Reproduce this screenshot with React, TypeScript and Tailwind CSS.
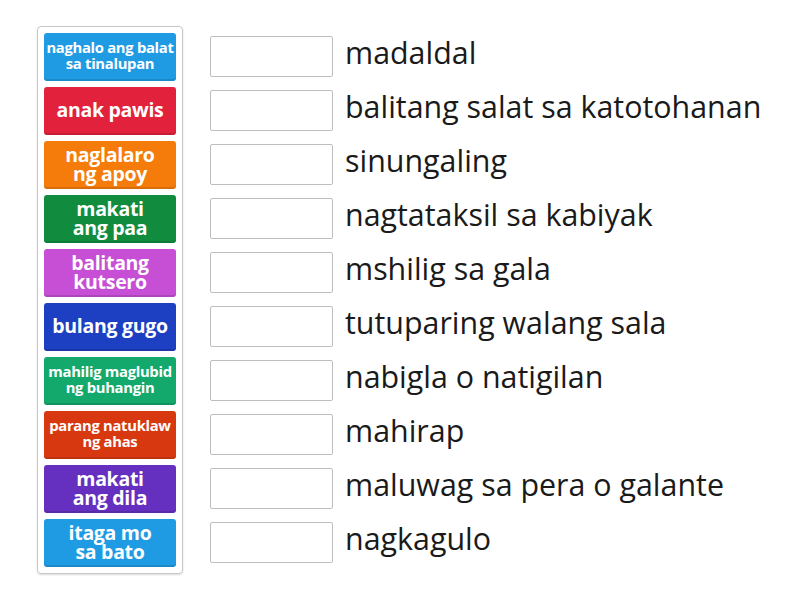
import React from "react";

const tiles: { lines: string[]; color: string; size: string }[] = [
  { lines: ["naghalo ang balat", "sa tinalupan"], color: "bg-[#1f9be3]", size: "text-[14.8px] leading-[16px] pb-[4px]" },
  { lines: ["anak pawis"], color: "bg-[#e2213c]", size: "text-[19.5px] leading-[22px] pb-[2px]" },
  { lines: ["naglalaro", "ng apoy"], color: "bg-[#f57c0a]", size: "text-[19.5px] leading-[19px] pb-[2px]" },
  { lines: ["makati", "ang paa"], color: "bg-[#118c3f]", size: "text-[19.5px] leading-[19px] pb-[2px]" },
  { lines: ["balitang", "kutsero"], color: "bg-[#c64fd6]", size: "text-[19.5px] leading-[19px] pb-[2px]" },
  { lines: ["bulang gugo"], color: "bg-[#1d3fc2]", size: "text-[19.5px] leading-[22px] pb-[2px]" },
  { lines: ["mahilig maglubid", "ng buhangin"], color: "bg-[#13a86c]", size: "text-[14.8px] leading-[16px] pb-[4px]" },
  { lines: ["parang natuklaw", "ng ahas"], color: "bg-[#d8380f]", size: "text-[14.8px] leading-[16px] pb-[4px]" },
  { lines: ["makati", "ang dila"], color: "bg-[#6530c0]", size: "text-[19.5px] leading-[19px] pb-[2px]" },
  { lines: ["itaga mo", "sa bato"], color: "bg-[#1f9be3]", size: "text-[19.5px] leading-[19px] pb-[2px]" },
];

const defs = [
  "madaldal",
  "balitang salat sa katotohanan",
  "sinungaling",
  "nagtataksil sa kabiyak",
  "mshilig sa gala",
  "tutuparing walang sala",
  "nabigla o natigilan",
  "mahirap",
  "maluwag sa pera o galante",
  "nagkagulo",
];

export default function App() {
  return (
    <div
      className="w-[800px] h-[600px] bg-white flex items-start pl-[37px] pt-[26px]"
      style={{ fontFamily: '"Open Sans", sans-serif' }}
    >
      <div className="w-[146px] border border-[#c8c8c8] rounded-[4px] px-[6px] py-[6px] flex flex-col gap-[6px] shadow-[0_1px_2px_rgba(0,0,0,0.15)]">
        {tiles.map((t, i) => (
          <div
            key={i}
            className={`${t.color} h-[48px] rounded-[3px] flex flex-col items-center justify-center text-white font-bold text-center tracking-[-0.3px] shadow-[inset_0_-2px_0_rgba(0,0,0,0.12)] ${t.size}`}
          >
            {t.lines.map((l, j) => (
              <span key={j} className="whitespace-nowrap">{l}</span>
            ))}
          </div>
        ))}
      </div>
      <div className="ml-[27px] pt-[10px] flex flex-col gap-[13px]">
        {defs.map((d, i) => (
          <div key={i} className="flex items-center h-[41px]">
            <div className="w-[123px] h-[41px] border border-[#bdbdbd] rounded-[2px] bg-white shrink-0" />
            <span className="ml-[12px] pb-[6px] text-[30.4px] leading-none text-[#1a1a1a] whitespace-nowrap">{d}</span>
          </div>
        ))}
      </div>
    </div>
  );
}
